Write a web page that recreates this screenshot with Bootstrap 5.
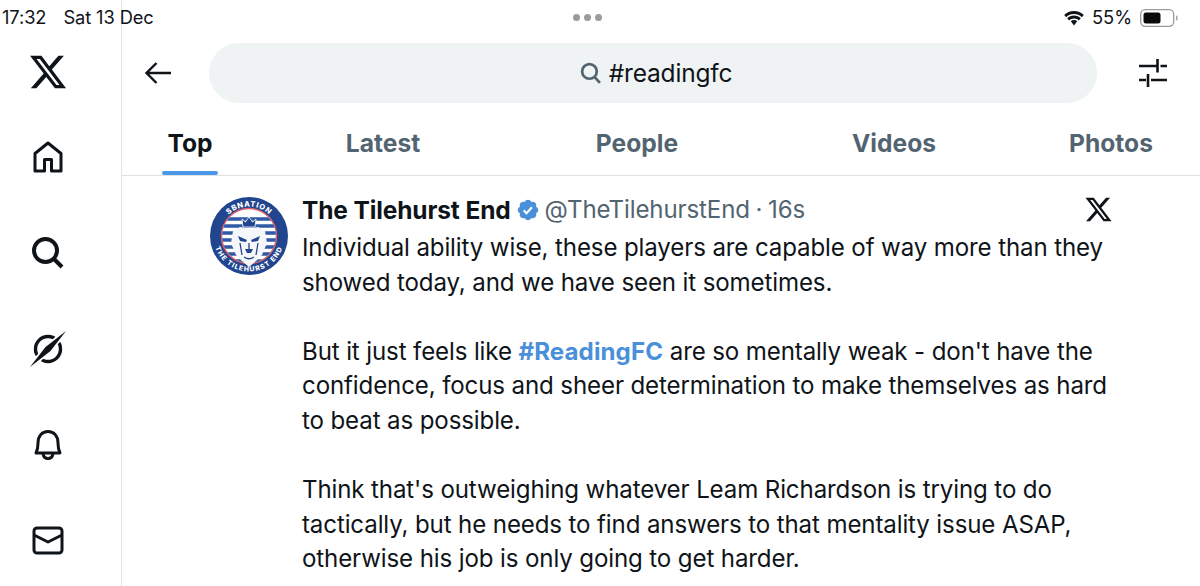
<!DOCTYPE html>
<html lang="en"><head><meta charset="utf-8"><title>#readingfc</title>
<link href="https://cdn.jsdelivr.net/npm/bootstrap@5.3.0/dist/css/bootstrap.min.css" rel="stylesheet">
<style>
html,body{height:586px;overflow:hidden;background:#fff}
body{font-family:Inter,"Liberation Sans",sans-serif;color:#0f1419;position:relative}
.shell{height:586px}
.rail{width:122px;flex:none;border-right:1px solid #e0e2e4;padding:52px 26px 0 0}
.rail svg{display:block}
.rail-x{margin-bottom:47px}
.rail-item{height:96px}
.status{position:absolute;left:0;right:0;top:0;height:36px;font-size:18.300px;padding:0 22px 0 2px;letter-spacing:-.1px}
.status .st-date{margin-left:17px}
.dots{position:absolute;left:573px;top:14px}
.dots i{display:block;width:7px;height:7px;border-radius:50%;background:#9b9b9b}
.topbar{height:103px;padding:43px 32px 0 22px}
.pill{height:60px;width:888px;background:#eff3f4;border-radius:30px;margin-left:37px;margin-right:41px;padding-left:6px;font-size:24.500px;letter-spacing:-.2px}
.tabs{height:73px;border-bottom:1px solid #dfe2e4}
.tabs a{color:#536471;font-weight:700;font-size:24.600px;text-decoration:none;position:relative;padding-top:24px;line-height:32px;text-align:center}
.tabs a.on{color:#0f1419}
.tabs a.on::after{content:"";position:absolute;bottom:0;left:50%;width:56px;margin-left:-28px;height:4px;border-radius:2px;background:#4a99e9}
.t1{width:136px}.t2{width:250px}.t3{width:258px}.t4{width:256px}.t5{width:178px}
.post{padding:18px 0 0 88px}
.avatar{flex:none;width:78px;height:78px;margin-right:14px;margin-top:3px}
.post-body{width:830px;font-size:24.100px;line-height:34.600px;letter-spacing:-.13px}
.who{height:31px;margin-bottom:6px;white-space:nowrap;line-height:30px}
.who b{font-weight:700;letter-spacing:-.13px;font-size:24.500px}
.who span{color:#536471;letter-spacing:-.13px;word-spacing:-1px}
.who svg.tick{margin:0 5px 0 5px}
.post-x{margin-left:auto;margin-right:19px}
.post-body p{margin:0 0 34.600px;white-space:nowrap}
.tag{color:#4a90d9;font-weight:700;text-decoration:none;letter-spacing:.1px}
</style></head>
<body>
<div class="shell d-flex">
  <nav class="rail d-flex flex-column align-items-center">
    <svg class="rail-x" width="40" height="40" viewBox="0 0 24 24" fill="#0f1419"><path d="M18.244 2.250h3.308l-7.227 8.260 8.502 11.240H16.170l-5.214-6.817L4.990 21.750H1.680l7.730-8.835L1.254 2.250H8.080l4.713 6.231zm-1.161 17.520h1.833L7.084 4.126H5.117z"/></svg>
    <div class="rail-item"><svg width="36" height="36" viewBox="0 0 36 36" fill="none" stroke="#0f1419" stroke-width="3" stroke-linejoin="round"><path d="M5 14.500 18 4l13 10.500V32h-9.500V20.500h-7V32H5z"/></svg></div>
    <div class="rail-item"><svg width="36" height="36" viewBox="0 0 36 36" fill="none" stroke="#0f1419" stroke-width="4"><circle cx="15.500" cy="15.500" r="11.500"/><path d="M24 24l8 8"/></svg></div>
    <div class="rail-item"><svg width="36" height="36" viewBox="0 0 36 36"><circle cx="18" cy="18" r="12.500" fill="none" stroke="#0f1419" stroke-width="3.400"/><path d="M36 0 0 36" stroke="#fff" stroke-width="7"/><path d="M36 0 20.500 20 0 36 15.500 16z" fill="#0f1419"/></svg></div>
    <div class="rail-item"><svg width="36" height="36" viewBox="0 0 36 36" fill="none" stroke="#0f1419" stroke-width="3" stroke-linejoin="round"><path d="M6 26c1.500-3 2-6 2-10C8 9 12 4.500 18 4.500S28 9 28 16c0 4 .5 7 2 10z"/><path d="M13 26.500c.5 3.500 2.500 5 5 5s4.500-1.500 5-5"/></svg></div>
    <div><svg width="36" height="36" viewBox="0 0 36 36" fill="none" stroke="#0f1419" stroke-width="3" stroke-linejoin="round"><rect x="4" y="5" width="28" height="25" rx="3"/><path d="M4 12 18 19l14-7"/></svg></div>
  </nav>
  <main class="flex-grow-1">
    <div class="topbar d-flex">
      <svg class="align-self-center" width="28" height="24" viewBox="0 0 28 24" fill="none" stroke="#0f1419" stroke-width="2.400"><path d="M27 12H2.500M12.500 2 2.500 12l10 10"/></svg>
      <div class="pill d-flex align-items-center justify-content-center">
        <svg class="me-2" width="21" height="22" viewBox="0 0 20 21" fill="none" stroke="#536471" stroke-width="2.600"><circle cx="9" cy="9" r="7"/><path d="m14 14.500 5 5.500"/></svg>#readingfc
      </div>
      <svg class="align-self-center" width="30" height="28" viewBox="0 0 30 28" fill="none" stroke="#0f1419" stroke-width="2.600"><path d="M1 7h18M19.500 0v13.500M22.500 7H29M1 21h7M10 15v13M13 21h16"/></svg>
    </div>
    <div class="tabs d-flex">
      <a class="on t1" href="#">Top</a><a class="t2" href="#">Latest</a><a class="t3" href="#">People</a><a class="t4" href="#">Videos</a><a class="t5" href="#">Photos</a>
    </div>
    <article class="post d-flex">
      <svg class="avatar" viewBox="0 0 78 78">
        <defs><path id="arcTop" d="M9.500 39a29.500 29.500 0 0 1 59 0"/><path id="arcBot" d="M3.500 39a35.500 35.500 0 0 0 71 0"/><clipPath id="inner"><circle cx="39" cy="39" r="27"/></clipPath></defs>
        <circle cx="39" cy="39" r="39" fill="#21458f"/>
        <circle cx="39" cy="39" r="27.500" fill="#fff" stroke="#d9606a" stroke-width="1.500"/>
        <g clip-path="url(#inner)" stroke="#2f5aa6" stroke-width="3.500"><path d="M10 22h58M10 29h58M10 36h58M10 43h58M10 50h58M10 57h58M10 64h58"/></g>
        <path d="M23 34l7-4 9 2 9-2 7 4 2 12-5 12-6 6-7 6-7-6-6-6-5-12z" fill="#f6f7fa"/>
        <path d="M33 30l-1-8 3.500 3L39 20l3.500 5 3.500-3-1 8z" fill="#21458f" stroke="#fff" stroke-width=".8"/>
        <path d="M28 39l9 4-1 2-6-1zM50 39l-9 4 1 2 6-1zM35 52h8l-2 4h-4z" fill="#21458f"/>
        <path d="M30 46l2 12M48 46l-2 12M39 46v6M34 60q5 3.500 10 0" fill="none" stroke="#21458f" stroke-width="1.300"/>
        <text font-family="Inter,sans-serif" font-size="7.500" font-weight="800" fill="#fff" letter-spacing=".7" text-anchor="middle"><textPath href="#arcTop" startOffset="50%">SBNATION</textPath></text>
        <text font-family="Inter,sans-serif" font-size="6.800" font-weight="800" fill="#fff" letter-spacing="1.100" text-anchor="middle"><textPath href="#arcBot" startOffset="50%">THE TILEHURST END</textPath></text>
      </svg>
      <div class="post-body">
        <div class="who d-flex align-items-center">
          <b>The Tilehurst End</b>
          <svg class="tick" width="24" height="24" viewBox="0 0 24 24"><path fill="#4a90d9" d="M22.250 12c0-1.430-.88-2.670-2.190-3.340.46-1.390.2-2.900-.81-3.910s-2.520-1.270-3.910-.81c-.66-1.310-1.910-2.190-3.340-2.190s-2.670.88-3.330 2.190c-1.400-.46-2.910-.2-3.920.81s-1.260 2.520-.8 3.910c-1.310.67-2.200 1.910-2.200 3.340s.89 2.670 2.200 3.340c-.46 1.390-.21 2.900.8 3.910s2.520 1.260 3.910.81c.67 1.310 1.910 2.190 3.340 2.190s2.680-.88 3.340-2.190c1.390.45 2.900.2 3.910-.81s1.270-2.520.81-3.910c1.310-.67 2.190-1.910 2.190-3.340z"/><path fill="#fff" d="m10.540 16.660-3.650-3.650 1.410-1.420 2.170 2.170 4.740-5.170 1.470 1.350z"/></svg>
          <span>@TheTilehurstEnd · 16s</span>
          <svg class="post-x" width="29" height="29" viewBox="0 0 24 24" fill="#0f1419"><path d="M18.244 2.250h3.308l-7.227 8.260 8.502 11.240H16.170l-5.214-6.817L4.990 21.750H1.680l7.730-8.835L1.254 2.250H8.080l4.713 6.231zm-1.161 17.520h1.833L7.084 4.126H5.117z"/></svg>
        </div>
        <p>Individual ability wise, these players are capable of way more than they<br>showed today, and we have seen it sometimes.</p>
        <p>But it just feels like <a class="tag" href="#">#ReadingFC</a> are so mentally weak - don't have the<br>confidence, focus and sheer determination to make themselves as hard<br>to beat as possible.</p>
        <p>Think that's outweighing whatever Leam Richardson is trying to do<br>tactically, but he needs to find answers to that mentality issue ASAP,<br>otherwise his job is only going to get harder.</p>
      </div>
    </article>
  </main>
</div>
<div class="status d-flex align-items-center">
  <span>17:32</span><span class="st-date">Sat 13 Dec</span>
  <span class="ms-auto d-flex align-items-center">
    <svg class="me-2" width="20" height="15" viewBox="0 0 20 15" fill="#0f1419"><path d="M10 3c3.100 0 5.800 1.200 7.800 3.200L19.800 4C17.200 1.500 13.800 0 10 0S2.800 1.500.2 4l2 2.200C4.200 4.200 6.900 3 10 3z"/><path d="M10 7.500c1.900 0 3.500.7 4.800 1.900l2-2.200C15 5.500 12.600 4.500 10 4.500S5 5.500 3.200 7.200l2 2.200C6.500 8.200 8.100 7.500 10 7.500z"/><path d="M10 9c-1.200 0-2.300.5-3.200 1.300L10 14.500l3.200-4.200C12.300 9.500 11.200 9 10 9z"/></svg>
    <span class="me-2">55%</span>
    <svg width="38" height="18" viewBox="0 0 38 18"><rect x=".7" y=".7" width="33" height="16.600" rx="4.500" fill="none" stroke="#9a9a9a" stroke-width="1.300"/><rect x="3.500" y="3.500" width="17" height="11" rx="2.500" fill="#0a0a0a"/><rect x="36" y="6.500" width="1.500" height="5" rx=".7" fill="#a5a5a5"/></svg>
  </span>
</div>
<div class="dots d-flex gap-1"><i></i><i></i><i></i></div>
<script src="https://cdn.jsdelivr.net/npm/bootstrap@5.3.0/dist/js/bootstrap.bundle.min.js"></script>
</body></html>
